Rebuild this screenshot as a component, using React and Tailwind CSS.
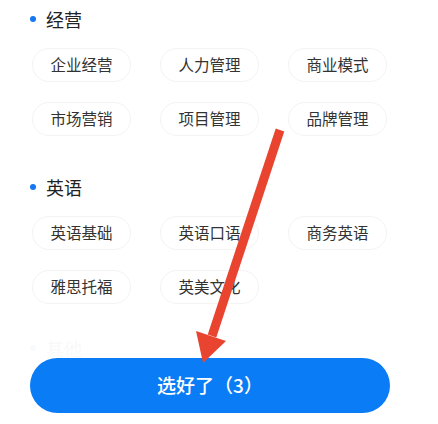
import React from 'react'

const sections = [
  { title: '经营', tags: ['企业经营', '人力管理', '商业模式', '市场营销', '项目管理', '品牌管理'] },
  { title: '英语', tags: ['英语基础', '英语口语', '商务英语', '雅思托福', '英美文化'] },
]

const SectionTitle = ({ title, className = '' }) => (
  <div className={`flex h-[20px] items-center ${className}`}>
    <span className="h-[6px] w-[6px] rounded-full bg-[#1677f0]" />
    <span className="ml-[10px] text-[18px] leading-[20px] text-[#222]">{title}</span>
  </div>
)

const Tag = ({ label }) => (
  <div className="flex h-[34px] w-[99px] items-center justify-center rounded-full border border-[#f3f3f3] bg-white text-[15.5px] text-[#333]">
    {label}
  </div>
)

export default function App() {
  return (
    <div className="relative h-[424px] w-[438px] overflow-hidden bg-white font-['Noto_Sans_CJK_SC',sans-serif]">
      <div className="pl-[30px] pt-[9px]">
        {sections.map((s, i) => (
          <div key={s.title} className={i > 0 ? 'mt-[41px]' : ''}>
            <SectionTitle title={s.title} />
            <div className="ml-[2px] mt-[19px] grid grid-cols-[99px_99px_99px] gap-x-[29px] gap-y-[20px]">
              {s.tags.map((t) => (
                <Tag key={t} label={t} />
              ))}
            </div>
          </div>
        ))}
        <SectionTitle title="其他" className="mt-[34px] opacity-[0.04]" />
      </div>

      {/* bottom fade + button */}
      <div className="absolute inset-x-0 bottom-0 h-[100px] bg-gradient-to-b from-white/0 via-white/80 to-white" />
      <button className="absolute bottom-[11px] left-[30px] h-[55px] w-[360px] rounded-full bg-[#0a7cf6] text-[19px] font-medium text-white">
        选好了（3）
      </button>

      {/* red arrow annotation */}
      <svg className="pointer-events-none absolute inset-0" width="438" height="424" viewBox="0 0 438 424">
        <line x1="280" y1="130" x2="212" y2="336" stroke="#e84430" strokeWidth="9" />
        <polygon points="196,331 226,341 203,363" fill="#e84430" />
      </svg>
    </div>
  )
}
